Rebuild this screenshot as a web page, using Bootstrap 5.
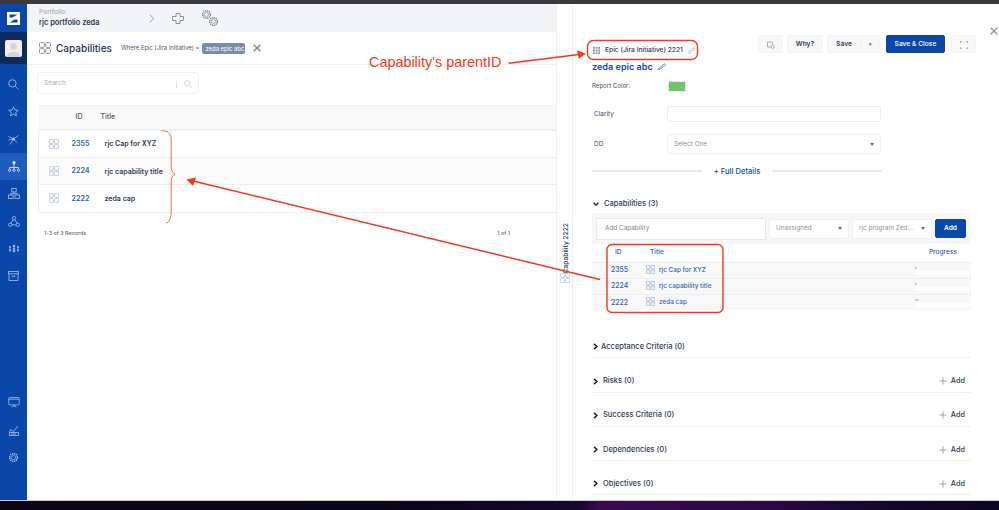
<!DOCTYPE html>
<html lang="en">
<head>
<meta charset="utf-8">
<title>Capabilities</title>
<link href="https://cdn.jsdelivr.net/npm/bootstrap@5.3.0/dist/css/bootstrap.min.css" rel="stylesheet">
<style>
html,body{height:510px;overflow:hidden;background:#fff}
body{font-family:Inter,"Liberation Sans",sans-serif;color:#2b3a55;font-size:7px;position:relative}
.top-strip{height:4px;background:#3a3a3e}
.desk-strip{height:10px;border-top:1px solid #c9c9cc;background:linear-gradient(90deg,#0c0418 0,#0a0418 38%,#14082e 58%,#3a0a4e 60%,#2c0a48 75%,#12062a 90%,#0c0620 100%)}
.shell{height:496px}
.rail{width:27px;background:#0a47a9;flex:none}
.rail-logo{height:28px}
.rail-user{height:32px;background:#0f2a5c}
.rail-photo{width:17px;height:17px;background:#efefef;border-radius:2px;overflow:hidden}
.rail-list{margin-top:7px}
.rail-item{height:27.3px;color:#a9c1ec}
.rail-item.is-on{background:#1f5cc0;color:#d5e2f8}
.rail-foot{margin-top:auto;padding-bottom:29px}
.left-pane{width:529px;flex:none}
.crumb{height:28px;background:#f3f4f6;padding-left:12px;color:#7a8598}
.crumb-label{font-size:6.6px;line-height:10px;color:#9aa3b2}
.crumb-name{font-size:7.4px;line-height:12px;font-weight:600;color:#2b3a55}
.crumb-info{width:110px}
.crumb-tools{gap:17px}
.head-row{height:33px;border-bottom:1px solid #f0f0f0;padding-left:12px}
.head-title{font-size:10px;font-weight:500;color:#22304d;margin-left:5px;width:65px;white-space:nowrap}
.head-where{font-size:5.9px;color:#4b5873;margin-right:3px;white-space:nowrap;padding-top:1px}
.where-chip{background:#7b8ba8;color:#fff;font-size:5.9px;font-weight:400;padding:3px;border-radius:2px;line-height:5px;width:43px;white-space:nowrap}
.head-x{margin-left:8px;color:#7f8794}
.search-box{width:162px;height:22px;margin:7px 0 0 10px;border:1px solid #f0f0f0;border-radius:3px;padding:2px 6px 0;color:#a5abb5;font-size:6.6px}
.search-bar{border-left:1px solid #e2e2e2;height:7px;margin-left:auto;margin-right:7px}
.rec-table{margin:11px 0 0 11px;width:518px;border-collapse:collapse;table-layout:fixed}
.rec-table th{height:24px;background:#f8f8f8;font-size:7px;font-weight:500;color:#4b5873;padding:0;border-bottom:2px solid #f0f0f0;border-top:1px solid #f4f4f4}
.rec-table td{height:27.5px;padding:2px 0 0;border-bottom:1px solid #ededed;vertical-align:middle;background:#fff;box-shadow:none;color:#2b3a55}
.rec-table tr:nth-child(2) td{background:#fbfbfb}
.rec-table td:first-child{border-left:1px solid #ededed;padding:0 0 0 10px}
.col-a{width:33px}.col-b{width:29px}
.rec-id{font-size:7.2px;font-weight:600;color:#2f5fae;display:block}
.rec-title{font-size:7px;font-weight:600;color:#2b3a55;white-space:nowrap}
.icon-soft{color:#a9b9d6}
.icon-head{color:#7f8ca3}
.rec-foot{margin:16px 0 0 17px;width:466px;font-size:5.4px;font-weight:500;color:#5c6880}
.tab-rail{width:17px;flex:none;border-left:1px solid #eeeff1;border-right:1px solid #eeeff1;border-top-left-radius:3px;margin-top:1px;padding-top:218px}
.tab-text{writing-mode:vertical-rl;transform:rotate(180deg);font-size:6.7px;font-weight:500;color:#2b3a55;line-height:10px;white-space:nowrap;margin-left:3px}
.drawer{flex:1;padding-left:19px;min-width:0}
.drawer-top{height:52px;width:406px}
.pill{padding-left:1px;gap:5px;font-size:6.7px;font-weight:500;line-height:12px;color:#2b3a55;white-space:nowrap}
.tool-row{margin-left:auto;padding-top:31px;gap:4px;align-self:flex-start}
.tool-btn{height:18px;background:#f8f8f8;border:1px solid #f4f4f4;border-radius:2px;font-size:6.7px;font-weight:600;color:#2b3a55;padding:1px 0 0;display:flex;align-items:center;justify-content:center}
.t-ic{width:25px}.t-why{width:36px}.t-save{width:34px}.t-car{width:19px;margin-left:-4px;color:#777;font-size:5px}
.t-main{width:59px;background:#0a47a9;border-color:#0a47a9;color:#fff;margin-left:2px;border-radius:2px;font-weight:500}
.t-main:hover{background:#0a47a9;color:#fff}
.t-full{width:25px;margin-left:2px}
.drawer-x{align-self:flex-start;margin:23px 0 0 14px;color:#8a8f98}
.epic-title{height:20px;margin-top:1px;font-size:9.1px;font-weight:600;color:#0f4ba8;gap:4px}
.rep-row{height:12px;margin-top:3px;font-size:6.2px;color:#3d4a63}
.form-lab{width:75px;flex:none;padding:2px 0 0 2px;font-size:6.5px;color:#3d4a63}
.rep-lab{padding:0;font-size:6.1px;width:76px}
.swatch{width:18px;height:11px;background:#6cc664;border:1px solid #e9e9e9;border-radius:1px}
.clar-row{height:16px;margin-top:14px}
.dd-row{height:20px;margin-top:12px}
.plain-input{width:214px;height:100%;border:1px solid #eeeeee;border-radius:2px;background:#fff}
.sel-box{height:100%;border:1px solid #f1f1f1;border-radius:2px;padding:1px 6px 0;color:#8a8f98;font-size:6.4px;background:#fff;white-space:nowrap}
.sel-box i{margin-left:auto;font-style:normal;color:#666;font-size:4px}
.dd-sel{width:214px}
.more-row{height:12px;margin-top:11px;width:290px;font-size:7.6px;font-weight:500;color:#0f4ba8;gap:12px}
.more-row span{flex:1;border-top:2px solid #e4e8f4}
.more-row b{font-weight:500;white-space:nowrap;padding-top:1px}
.cap-head{height:12px;margin-top:20px;font-size:7.5px;font-weight:500;gap:5px;padding:1px 0 0 1px;color:#2b3a55}
.add-bar{height:31px;margin-top:4px;width:379px;background:#f7f7f7;padding:0 5px 0 4px;gap:3px}
.add-input{width:170px;height:22px;background:#fff;border:1px solid #e8e8e8;font-size:6.4px;color:#7d8490;padding:1px 8px 0;flex:none}
.add-sel{width:80px;height:20px;flex:none}
.add-go{width:31px;height:19px;background:#0a47a9;border-color:#0a47a9;color:#fff;font-size:6.6px;font-weight:600;padding:0;border-radius:2px;flex:none}
.cap-table{width:379px;border-collapse:collapse;table-layout:fixed;margin:0}
.cap-table th{height:18px;padding:1px 0 0;font-size:6.6px;font-weight:500;color:#2f5fae;background:#fff;border:0}
.cap-table td{height:16px;padding:1px 0 0;background:#f8f8f8;border-top:1px solid #eeeeee;font-size:6.4px;font-weight:500;color:#2f5fae}
.cap-table td:nth-child(2){font-size:6.9px}
.c-1{width:19px}.c-2{width:35px}.c-4{width:56px}
.cap-pe{padding-right:14px !important}
.cap-table .cap-name{white-space:nowrap}
.cap-name svg{margin-right:4px;vertical-align:-2px;color:#8fa7d0}
.mini-bar{height:4px;width:54px;background:#fff;margin-top:1px}
.mini-tick{font-size:4px;line-height:4px;color:#aaa;height:4px}
.sec-first{margin-top:14px}
.sec-row{height:34.3px;width:379px;border-bottom:1px solid #efefef;padding:0 6px 4.5px 1px;font-size:7.5px;font-weight:500;line-height:12px;color:#2b3a55}
.sec-gap{gap:5px}
.sec-first .sec-gap{gap:3px}
.sec-add{margin-left:auto;gap:4px;color:#2b3a55;font-size:7.3px}
.mark-layer{position:absolute;left:0;top:0;pointer-events:none}
.mark-text{position:absolute;left:369px;top:53px;font-family:"Liberation Sans",sans-serif;font-size:14.4px;line-height:18px;color:#f03a1c;white-space:nowrap}
</style>
</head>
<body>
<svg width="0" height="0" class="position-absolute">
  <defs>
    <symbol id="grid4" viewBox="0 0 12 12"><g fill="none" stroke="currentColor" stroke-width=".9"><rect x=".5" y=".5" width="4.8" height="4.8" rx="1"/><rect x="6.7" y=".5" width="4.8" height="4.8" rx="1"/><rect x=".5" y="6.7" width="4.8" height="4.8" rx="1"/><rect x="6.7" y="6.7" width="4.8" height="4.8" rx="1"/></g></symbol>
    <symbol id="plus-thin" viewBox="0 0 10 10"><path d="M5 .5v9M.5 5h9" stroke="currentColor" stroke-width=".8" fill="none"/></symbol>
    <symbol id="chev-r" viewBox="0 0 6 8"><path d="M1.200 .8 4.600 4 1.200 7.200" fill="none" stroke="#1c2a48" stroke-width="2"/></symbol>
    <symbol id="gear" viewBox="0 0 12 12"><circle cx="6" cy="6" r="4.2" fill="none" stroke="currentColor" stroke-width="1.6" stroke-dasharray="1.4 .8"/><circle cx="6" cy="6" r="2.2" fill="none" stroke="currentColor" stroke-width=".7"/></symbol>
  </defs>
</svg>

<div class="top-strip"></div>
<div class="shell d-flex">
  <nav class="rail d-flex flex-column">
    <div class="rail-logo d-flex align-items-center justify-content-center">
      <svg width="13" height="13" viewBox="0 0 13 13"><path d="M0 0h13v13H0z" fill="#fff"/><path d="M2.500 2.500h8L5.500 5.500H2.500zM10.500 10.500h-8l5-3h3z" fill="#0a47a9"/></svg>
    </div>
    <div class="rail-user d-flex align-items-center justify-content-center">
      <div class="rail-photo d-flex justify-content-center">
        <svg width="17" height="17" viewBox="0 0 16 16"><circle cx="8" cy="6" r="3.200" fill="#d6d6d6"/><path d="M2 16c0-4 3-5 6-5s6 1 6 5z" fill="#d6d6d6"/></svg>
      </div>
    </div>
    <div class="rail-list">
      <div class="rail-item d-flex align-items-center justify-content-center"><svg width="11" height="11" viewBox="0 0 11 11" fill="none" stroke="currentColor" stroke-width=".8"><circle cx="4.400" cy="4.400" r="3.700"/><path d="m7.200 7.200 3.300 3.300"/></svg></div>
      <div class="rail-item d-flex align-items-center justify-content-center"><svg width="11" height="11" viewBox="0 0 12 12" fill="none" stroke="currentColor" stroke-width=".9"><path d="m6 .9 1.500 3.400 3.700.4-2.800 2.400.8 3.600L6 8.800l-3.200 1.900.8-3.600L.8 4.700l3.700-.4z"/></svg></div>
      <div class="rail-item d-flex align-items-center justify-content-center"><svg width="11" height="11" viewBox="0 0 11 11" fill="none" stroke="currentColor" stroke-width=".8"><path d="M.5 2.500 5.500 5l5-3.500M5.500 5 2 10.500M5.500 5 9 8.500M.5 6 5.500 5"/><circle cx="5.500" cy="5" r="1.200" fill="currentColor"/></svg></div>
      <div class="rail-item is-on d-flex align-items-center justify-content-center"><svg width="12" height="11" viewBox="0 0 12 11" fill="none" stroke="currentColor" stroke-width=".9"><circle cx="6" cy="1.700" r="1.200" fill="currentColor"/><path d="M6 3v3.500M1.600 8V6.500h8.800V8M6 6.500V8"/><circle cx="1.600" cy="9.300" r="1.100"/><circle cx="6" cy="9.300" r="1.100"/><circle cx="10.400" cy="9.300" r="1.100"/></svg></div>
      <div class="rail-item d-flex align-items-center justify-content-center"><svg width="12" height="11" viewBox="0 0 12 11" fill="none" stroke="currentColor" stroke-width=".8"><rect x="3.800" y=".5" width="4.400" height="3.400"/><rect x=".5" y="7" width="4.600" height="3.500"/><rect x="6.900" y="7" width="4.600" height="3.500"/><path d="M6 3.900v1.500M2.800 7V5.400h6.400V7"/></svg></div>
      <div class="rail-item d-flex align-items-center justify-content-center"><svg width="12" height="11" viewBox="0 0 12 11" fill="none" stroke="currentColor" stroke-width=".8"><circle cx="6" cy="2.200" r="1.700"/><circle cx="2.200" cy="8.800" r="1.700"/><circle cx="9.800" cy="8.800" r="1.700"/><path d="M5.200 3.700 3 7.300M6.800 3.700 9 7.300M3.900 8.800h4.200"/></svg></div>
      <div class="rail-item d-flex align-items-center justify-content-center"><svg width="12" height="9" viewBox="0 0 12 9" fill="currentColor"><circle cx="2" cy="3" r="1"/><circle cx="6" cy="2" r="1.200"/><circle cx="10" cy="3" r="1"/><path d="M1 4.500h2v3H1zM4.800 3.600h2.400v4.600H4.800zM9 4.500h2v3H9z" opacity=".8"/></svg></div>
      <div class="rail-item d-flex align-items-center justify-content-center"><svg width="11" height="10" viewBox="0 0 11 10" fill="none" stroke="currentColor" stroke-width=".8"><rect x=".4" y=".5" width="10.200" height="2.300"/><path d="M1 2.800v6.700h9V2.800M4 4.400v1h3v-1"/></svg></div>
    </div>
    <div class="rail-foot">
      <div class="rail-item d-flex align-items-center justify-content-center"><svg width="12" height="11" viewBox="0 0 12 11" fill="none" stroke="currentColor" stroke-width=".8"><rect x=".8" y=".5" width="10.400" height="7.400" rx=".7"/><path d="M.8 2.200h10.400M6 8v1.500M3.500 10.300 6 8.600l2.500 1.700"/></svg></div>
      <div class="rail-item d-flex align-items-center justify-content-center"><svg width="10" height="11" viewBox="0 0 10 11" fill="none" stroke="currentColor" stroke-width=".8"><path d="M.5 10.500h9v-3h-9zM.5 7.500l1-3 3 2L9 1"/><path d="M2 9h5"/></svg></div>
      <div class="rail-item d-flex align-items-center justify-content-center"><svg width="11" height="11" viewBox="0 0 12 12" class="d-block"><use href="#gear"/></svg></div>
    </div>
  </nav>

  <section class="left-pane">
    <div class="crumb d-flex align-items-center">
      <div class="crumb-info">
        <div class="crumb-label">Portfolio:</div>
        <div class="crumb-name">rjc portfolio zeda</div>
      </div>
      <div class="crumb-tools d-flex align-items-center">
        <svg width="6" height="9" viewBox="0 0 6 9" fill="none" stroke="currentColor" stroke-width=".8"><path d="m.8.7 4 3.800-4 3.800"/></svg>
        <svg width="12" height="11" viewBox="0 0 12 11" fill="none" stroke="currentColor" stroke-width=".9"><path d="M4 .5h4v3h3.500v4H8v3H4v-3H.5v-4H4z"/></svg>
        <svg width="18" height="18" viewBox="0 0 18 18" class="d-block"><use href="#gear" x="0" y="0" width="11" height="11"/><use href="#gear" x="7" y="7" width="11" height="11"/></svg>
      </div>
    </div>
    <div class="head-row d-flex align-items-center">
      <svg width="12" height="12" class="icon-head"><use href="#grid4"/></svg>
      <div class="head-title">Capabilities</div>
      <span class="head-where">Where Epic (Jira Initiative) =</span>
      <span class="where-chip">zeda epic abc</span>
      <svg class="head-x" width="8" height="8" viewBox="0 0 7 7"><path d="m.6.6 5.800 5.800M6.400.6.600 6.400" stroke="currentColor" stroke-width="1.300"/></svg>
    </div>
    <div class="search-box d-flex align-items-center">
      <span>Search</span><span class="search-bar"></span>
      <svg width="8" height="8" viewBox="0 0 11 11" fill="none" stroke="#c4c8cf" stroke-width="1"><circle cx="4.400" cy="4.400" r="3.700"/><path d="m7.200 7.200 3.300 3.300"/></svg>
    </div>
    <table class="rec-table">
      <thead><tr><th class="col-a"></th><th class="col-b ps-1">ID</th><th>Title</th></tr></thead>
      <tbody>
        <tr><td><svg width="10" height="10" class="d-block icon-soft"><use href="#grid4"/></svg></td><td><a class="rec-id text-decoration-none" href="#">2355</a></td><td><span class="rec-title ps-1">rjc Cap for XYZ</span></td></tr>
        <tr><td><svg width="10" height="10" class="d-block icon-soft"><use href="#grid4"/></svg></td><td><a class="rec-id text-decoration-none" href="#">2224</a></td><td><span class="rec-title ps-1">rjc capability title</span></td></tr>
        <tr><td><svg width="10" height="10" class="d-block icon-soft"><use href="#grid4"/></svg></td><td><a class="rec-id text-decoration-none" href="#">2222</a></td><td><span class="rec-title ps-1">zeda cap</span></td></tr>
      </tbody>
    </table>
    <div class="rec-foot d-flex justify-content-between"><span>1-3 of 3 Records</span><span>1 of 1</span></div>
  </section>

  <aside class="tab-rail d-flex flex-column align-items-center">
    <span class="tab-text">Capability 2222</span>
    <svg width="10" height="10" class="icon-soft"><use href="#grid4"/></svg>
  </aside>

  <main class="drawer">
    <div class="drawer-top d-flex">
      <div class="pill d-flex align-items-center align-self-end">
        <svg width="7" height="7" viewBox="0 0 7 7" fill="#8a8f98"><path d="M0 0h1.800v1.800H0zM2.600 0h1.800v1.800H2.600zM5.200 0H7v1.800H5.200zM0 2.600h1.800v1.800H0zM2.600 2.600h1.800v1.800H2.600zM5.200 2.600H7v1.800H5.200zM0 5.200h1.800V7H0zM2.600 5.200h1.800V7H2.600zM5.200 5.200H7V7H5.200z"/></svg>
        <span>Epic (Jira Initiative) 2221</span>
        <svg width="7" height="7" viewBox="0 0 7 7" fill="none" stroke="#a5abb5" stroke-width=".8"><path d="M3 4 4 3M2.400 3 1 4.400a1.100 1.100 0 0 0 1.600 1.600L4 4.600M3 2.400 4.400 1A1.100 1.100 0 0 1 6 2.600L4.600 4"/></svg>
      </div>
      <div class="tool-row d-flex">
        <button class="btn tool-btn t-ic" type="button"><svg width="8" height="8" viewBox="0 0 8 8" fill="none" stroke="#8a8f98" stroke-width=".7"><path d="M.5 1h5v2M.5 1v5h3"/><circle cx="5.600" cy="5.600" r="1.700"/></svg></button>
        <button class="btn tool-btn t-why" type="button">Why?</button>
        <button class="btn tool-btn t-save" type="button">Save</button>
        <button class="btn tool-btn t-car" type="button">▾</button>
        <button class="btn tool-btn t-main" type="button">Save &amp; Close</button>
        <button class="btn tool-btn t-full" type="button"><svg width="8" height="8" viewBox="0 0 8 8" fill="none" stroke="#8a8f98" stroke-width=".7"><path d="M.4 2V.4H2M6 .4h1.600V2M.4 6v1.600H2M6 7.600h1.600V6"/></svg></button>
      </div>
      <svg class="drawer-x" width="8" height="8" viewBox="0 0 8 8"><path d="m.7.7 6.600 6.600M7.300.7.700 7.300" stroke="currentColor" stroke-width="1.300"/></svg>
    </div>

    <div class="epic-title d-flex align-items-center">
      <span>zeda epic abc</span>
      <svg width="10" height="8" viewBox="0 0 10 8" fill="none"><path d="m1 7 1-2L7.500.8l1.400 1.100L3 6z" stroke="#5f86cc" stroke-width=".9"/></svg>
    </div>
    <div class="rep-row d-flex align-items-center"><span class="form-lab rep-lab">Report Color:</span><span class="swatch d-block"></span></div>
    <div class="clar-row d-flex align-items-center"><span class="form-lab">Clarity</span><div class="plain-input"></div></div>
    <div class="dd-row d-flex align-items-center"><span class="form-lab">DD</span><div class="sel-box dd-sel d-flex align-items-center">Select One<i>▼</i></div></div>
    <div class="more-row d-flex align-items-center"><span></span><b>+ Full Details</b><span></span></div>

    <div class="cap-head d-flex align-items-center">
      <svg width="6" height="6" viewBox="0 0 8 6"><path d="M.8 1.200 4 4.600l3.200-3.400" fill="none" stroke="#22304d" stroke-width="1.900"/></svg>
      <span>Capabilities (3)</span>
    </div>
    <div class="add-bar d-flex align-items-center">
      <div class="add-input d-flex align-items-center">Add Capability</div>
      <div class="sel-box add-sel d-flex align-items-center">Unassigned<i>▼</i></div>
      <div class="sel-box add-sel d-flex align-items-center">rjc program Zed...<i>▼</i></div>
      <button class="btn add-go" type="button">Add</button>
    </div>
    <table class="cap-table">
      <thead><tr><th class="c-1"></th><th class="c-2 ps-1">ID</th><th class="ps-1">Title</th><th class="c-4 text-end cap-pe text-nowrap">Progress</th></tr></thead>
      <tbody>
        <tr><td></td><td>2355</td><td class="cap-name"><svg width="9" height="9"><use href="#grid4"/></svg>rjc Cap for XYZ</td><td><div class="mini-tick">▸</div><div class="mini-bar"></div></td></tr>
        <tr><td></td><td>2224</td><td class="cap-name"><svg width="9" height="9"><use href="#grid4"/></svg>rjc capability title</td><td><div class="mini-tick">▸</div><div class="mini-bar"></div></td></tr>
        <tr><td></td><td>2222</td><td class="cap-name"><svg width="9" height="9"><use href="#grid4"/></svg>zeda cap</td><td><div class="mini-tick">▸▸</div><div class="mini-bar"></div></td></tr>
      </tbody>
    </table>

    <div class="sec-first">
      <div class="sec-row d-flex align-items-end"><span class="sec-gap d-flex align-items-center"><svg width="5" height="7"><use href="#chev-r"/></svg>Acceptance Criteria (0)</span></div>
    </div>
    <div class="sec-row d-flex align-items-end"><span class="sec-gap d-flex align-items-center"><svg width="5" height="7"><use href="#chev-r"/></svg>Risks (0)</span><span class="sec-add d-flex align-items-center"><svg width="8" height="8" class="text-secondary"><use href="#plus-thin"/></svg>Add</span></div>
    <div class="sec-row d-flex align-items-end"><span class="sec-gap d-flex align-items-center"><svg width="5" height="7"><use href="#chev-r"/></svg>Success Criteria (0)</span><span class="sec-add d-flex align-items-center"><svg width="8" height="8" class="text-secondary"><use href="#plus-thin"/></svg>Add</span></div>
    <div class="sec-row d-flex align-items-end"><span class="sec-gap d-flex align-items-center"><svg width="5" height="7"><use href="#chev-r"/></svg>Dependencies (0)</span><span class="sec-add d-flex align-items-center"><svg width="8" height="8" class="text-secondary"><use href="#plus-thin"/></svg>Add</span></div>
    <div class="sec-row d-flex align-items-end"><span class="sec-gap d-flex align-items-center"><svg width="5" height="7"><use href="#chev-r"/></svg>Objectives (0)</span><span class="sec-add d-flex align-items-center"><svg width="8" height="8" class="text-secondary"><use href="#plus-thin"/></svg>Add</span></div>
  </main>
</div>
<div class="desk-strip"></div>

<svg class="mark-layer" width="999" height="510" viewBox="0 0 999 510" fill="none">
  <rect x="587.500" y="40.500" width="110" height="19" rx="6" stroke="#ef3a1e" stroke-width="1.400"/>
  <rect x="607" y="244.500" width="116" height="68" rx="5" stroke="#ef3a1e" stroke-width="1.400"/>
  <path d="M508.500 63.300 579 54.500" stroke="#ef3a1e" stroke-width="1.400"/>
  <path d="m586 53.700-9-3.400 1 4.600.6 3.800z" fill="#ef3a1e"/>
  <path d="M600 279.500 193 181" stroke="#ef3a1e" stroke-width="1.500"/>
  <path d="m186.500 179.500 9.500-2-1.500 4.500-1.500 4z" fill="#ef3a1e"/>
  <path d="M161.500 130.500c6 .8 9.500 2 9.700 8.500v27c0 4 1.500 7 3.800 8.500-2.500 1-3.800 3-3.800 7v29c0 7-1.500 12-5.500 12.500" stroke="#ee6a52" stroke-width="1"/>
</svg>
<div class="mark-text">Capability's parentID</div>
</body>
</html>
